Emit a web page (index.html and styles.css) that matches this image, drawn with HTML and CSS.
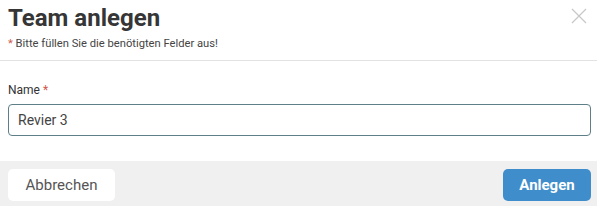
FILE: index.html
```html
<!DOCTYPE html>
<html lang="de">
<head>
    <meta charset="UTF-8">
    <meta name="viewport" content="width=device-width, initial-scale=1.0">
    <title>Team anlegen</title>
    <link rel="stylesheet" href="styles.css">
</head>
<body>
    <div class="modal">
        <div class="modal-header">
            <div>
                <h1>Team anlegen</h1>
                <p class="hint"><span class="req">*</span> Bitte füllen Sie die benötigten Felder aus!</p>
            </div>
            <button type="button" class="close" aria-label="Schließen">
                <svg width="16" height="16" viewBox="0 0 16 16">
                    <path d="M1 1 L15 15 M15 1 L1 15" stroke="#c8c8c8" stroke-width="1.3" fill="none"/>
                </svg>
            </button>
        </div>
        <div class="modal-body">
            <label for="name">Name <span class="req">*</span></label>
            <input type="text" id="name" value="Revier 3">
        </div>
        <div class="modal-footer">
            <button type="button" class="btn btn-cancel">Abbrechen</button>
            <button type="submit" class="btn btn-primary">Anlegen</button>
        </div>
    </div>
</body>
</html>
```
FILE: styles.css
```css
body {
    margin: 0;
    font-family: Roboto, 'Liberation Sans', sans-serif;
    background: #fff;
    color: #3a3a3a;
}

.modal {
    width: 597px;
    height: 206px;
    display: flex;
    flex-direction: column;
}

.modal-header {
    display: flex;
    justify-content: space-between;
    align-items: flex-start;
    padding: 4px 8px 0 8px;
    height: 56px;
    border-bottom: 1px solid #e2e2e2;
}

h1 {
    margin: 0;
    font-size: 24px;
    font-weight: 700;
    line-height: 28px;
    color: #363636;
}

.hint {
    margin: 5px 0 0 0;
    font-size: 11.2px;
    line-height: 14px;
    color: #444;
}

.req {
    color: #d0574a;
}

.close {
    background: none;
    border: none;
    padding: 0;
    margin: 4px 2px 0 0;
    cursor: pointer;
    line-height: 0;
}

.modal-body {
    padding: 22px 6px 0 8px;
    height: 78px;
}

label {
    display: block;
    font-size: 12px;
    line-height: 14px;
    margin-bottom: 7px;
    color: #333;
}

input[type="text"] {
    box-sizing: border-box;
    width: 583px;
    height: 32px;
    padding: 0 9px;
    border: 1px solid #5e7f87;
    border-radius: 4px;
    font-family: Roboto, 'Liberation Sans', sans-serif;
    font-size: 14px;
    color: #444;
    outline: none;
}

.modal-footer {
    flex: 1;
    background: #f0f0f0;
    display: flex;
    justify-content: space-between;
    align-items: flex-start;
    padding: 8px 6px 0 8px;
}

.btn {
    height: 32px;
    border: none;
    border-radius: 5px;
    font-family: Roboto, 'Liberation Sans', sans-serif;
    font-size: 15px;
    cursor: pointer;
}

.btn-cancel {
    width: 107px;
    background: #fff;
    color: #555;
}

.btn-primary {
    width: 88px;
    background: #3f8ecb;
    color: #fff;
    font-weight: 700;
}
```
